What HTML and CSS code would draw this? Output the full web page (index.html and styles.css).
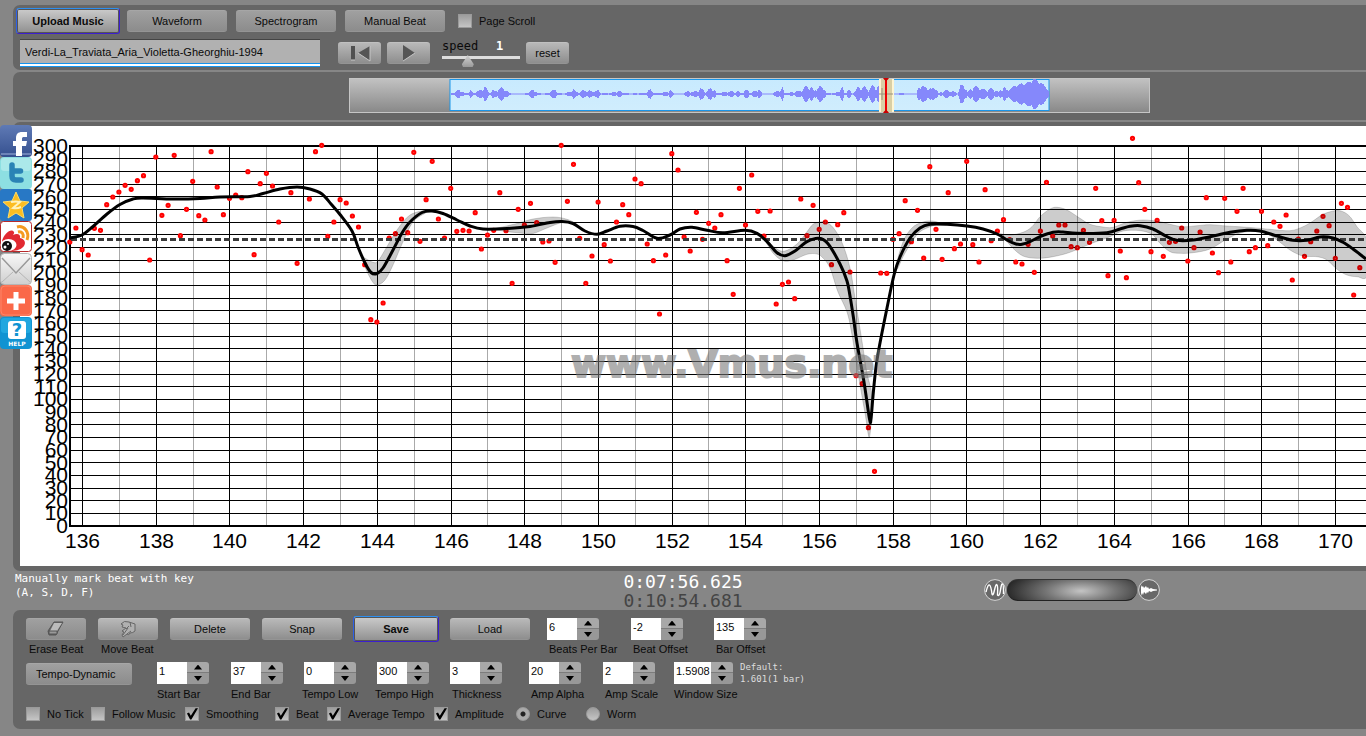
FILE: index.html
```html
<!DOCTYPE html>
<html lang="en">
<head>
<meta charset="utf-8">
<title>Vmus.net</title>
<link rel="stylesheet" href="styles.css">
</head>
<body>
<nav class="share" aria-label="Share">
  <a href="#" aria-label="Facebook"><svg viewBox="0 0 32 32"><defs><linearGradient id="fb" x2="0" y2="1"><stop offset="0" stop-color="#5f7ab5"/><stop offset="1" stop-color="#35508f"/></linearGradient></defs><rect width="32" height="32" rx="4" fill="url(#fb)"/><rect x="1" y="28" width="30" height="2" fill="#6d84b8"/><path d="M16 31V21h-3v-5h3v-3c0-4 2-6 6-6h5v5h-3c-1.500 0-2 .6-2 2v2h5l-1 5h-4v10z" fill="#fff"/></svg></a>
  <a href="#" aria-label="Twitter"><svg viewBox="0 0 32 32"><rect width="32" height="32" rx="4" fill="#8ddfe2"/><rect x="1" y="1" width="30" height="13" rx="3" fill="#abe9ea"/><path d="M12 8v11q0 4 4 4h5M12 14h8.500" fill="none" stroke="#2a83b5" stroke-width="5.500" stroke-linecap="round" stroke-linejoin="round"/></svg></a>
  <a href="#" aria-label="Qzone"><svg viewBox="0 0 32 32"><rect width="32" height="32" rx="3" fill="#2878c5"/><path d="M16 3l4 9 9 1-7 6 2 10-8-5-8 5 2-10-7-6 9-1z" fill="#fcbd22" stroke="#fddc68"/><path d="M11 13q5-1 9 0l-7 6q4 1 8-1" fill="none" stroke="#fff3bd" stroke-width="2"/></svg></a>
  <a href="#" aria-label="Weibo"><svg viewBox="0 0 32 32"><rect x=".5" y=".5" width="31" height="30" rx="3" fill="#fff" stroke="#b7292b"/><path d="M2 20C4 13 10 8 13 10c2 1 1 3 0 4 4-2 8-1 7 3 5 1 6 5 4 8-4 6-19 7-22 0z" fill="#e22931"/><ellipse cx="8.500" cy="24" rx="8" ry="6" fill="#fff"/><circle cx="7" cy="25" r="5" fill="#111"/><circle cx="5" cy="26" r="1.500" fill="#fff"/><circle cx="8" cy="23" r="1" fill="#fff"/><path d="M17 6c7-2 13 5 10 13M18 11c4-1 6 2 5 6" fill="none" stroke="#f49a22" stroke-width="3"/></svg></a>
  <a href="#" aria-label="Email"><svg viewBox="0 0 32 32"><defs><linearGradient id="ml" x2="0" y2="1"><stop offset="0" stop-color="#f7f7f7"/><stop offset="1" stop-color="#cfcfcf"/></linearGradient></defs><rect x=".5" y=".5" width="31" height="31" rx="4" fill="url(#ml)" stroke="#b5b5b5"/><path d="M2 29l11-10M30 29L19 19" stroke="#b5b5b5"/><path d="M2 5l14 15L30 5" fill="none" stroke="#999" stroke-width="1.500"/></svg></a>
  <a href="#" aria-label="More"><svg viewBox="0 0 32 32"><rect width="32" height="31" rx="4" fill="#fa6848"/><rect x="1" y="1" width="30" height="29" rx="4" fill="none" stroke="#fc8568"/><path d="M13.500 7h5v6.500H25v5h-6.500V25h-5v-6.500H7v-5h6.500z" fill="#fff"/></svg></a>
  <a href="#" aria-label="Help"><svg viewBox="0 0 32 32"><rect width="32" height="32" rx="4" fill="#1093d2"/><rect x="1" y="1" width="30" height="15" rx="3" fill="#20a7df"/><rect x="8" y="4" width="18" height="18" rx="3" fill="#fff"/><text x="17" y="19" class="share-mark">?</text><text x="17" y="29" class="share-help">HELP</text></svg></a>
</nav>

<main class="app">
  <header class="panel toolbar">
    <div class="row row-modes">
      <button class="btn btn-focus btn-wide">Upload Music</button>
      <button class="btn btn-dim btn-wide">Waveform</button>
      <button class="btn btn-dim btn-wide">Spectrogram</button>
      <button class="btn btn-dim btn-wide">Manual Beat</button>
      <label class="check check-scroll"><input type="checkbox">Page Scroll</label>
    </div>
    <div class="row row-track">
      <input class="track" type="text" aria-label="Track" value="Verdi-La_Traviata_Aria_Violetta-Gheorghiu-1994">
      <button class="btn btn-icon" aria-label="Back to start"><svg width="22" height="18" viewBox="0 0 22 18"><path d="M2 2h4v14H2z" fill="#505050"/><path d="M21 2L9 9l12 8z" fill="#555"/><path d="M6 16H2M9 9l12 8V2" fill="none" stroke="#c6c6c6"/></svg></button>
      <button class="btn btn-icon" aria-label="Play"><svg width="22" height="18" viewBox="0 0 22 18"><path d="M5 1v16l12-8z" fill="#555"/><path d="M5 17l12-8" stroke="#c6c6c6"/></svg></button>
      <div class="speed">
        <label for="speed">speed</label><output for="speed">1</output>
        <input id="speed" type="range" min="0" max="3" step="0.1" value="0.9">
      </div>
      <button class="btn btn-icon">reset</button>
    </div>
  </header>

  <section class="panel overview">
    <svg id="overview" viewBox="349 78 801 36" role="img" aria-label="Recording overview">
      <defs>
        <linearGradient id="og" x2="0" y2="1"><stop offset="0" stop-color="#c2c2c2"/><stop offset="1" stop-color="#888"/></linearGradient>
        <linearGradient id="sg" x2="0" y2="1"><stop offset="0" stop-color="#c8eafe"/><stop offset="1" stop-color="#d0edfd"/></linearGradient>
      </defs>
      <rect x="349.500" y="78.500" width="800" height="34" fill="url(#og)" stroke="#c6c6c6"/>
      <rect x="450" y="79.500" width="599" height="31" fill="url(#sg)" stroke="#1b95e8"/>
      <path id="wave" fill="#8588fb"/>
      <rect x="879" y="79" width="15" height="33" fill="#fff5d2"/>
      <rect x="881" y="79" width="11" height="33" fill="#d9cfa5"/>
      <path d="M879 94h14M882 88v12" stroke="#98917c"/>
      <rect x="885" y="79" width="2" height="33" fill="#e00"/>
      <path d="M883 78h6q-1 2-3 3q-2-1-3-3zM883 113h6q-1-2-3-3q-2 1-3 3z" fill="#c00"/>
    </svg>
  </section>

  <section class="panel chart">
    <svg id="chart" viewBox="20 126 1346 440" role="img" aria-label="Tempo curve">
      <g id="grid"></g>
      <g id="dots"></g>
      <g id="bands"></g>
      <path class="average" d="M71 239.500H1366"/>
      <path id="curve"/>
      <text class="mark" x="571" y="377">www.Vmus.net</text>
      <g id="axes"></g>
    </svg>
  </section>

  <section class="status">
    <p class="hint">Manually mark beat with key<br>(A, S, D, F)</p>
    <p class="clock">0:07:56.625<br><span class="total">0:10:54.681</span></p>
    <div class="zoom">
      <svg width="22" height="22" viewBox="0 0 22 22"><circle cx="11" cy="11" r="10.400" fill="#686868" stroke="#d5d5d5"/><path d="M2 13q2-8 3.500-7T8 15q1 3 2.500-4T13 6q1 1 .5 10 2 2 3-5t2-6q1 0 1 10" fill="none" stroke="#fff" stroke-width="1.400"/></svg>
      <div class="drum"></div>
      <svg width="22" height="22" viewBox="0 0 22 22"><circle cx="11" cy="11" r="10.400" fill="#686868" stroke="#d5d5d5"/><path d="M3 6l1 2 1-1 1 2 2-2 1 2 1-1 1 2 2-1 2 1 4 .5v1l-4 .5-2 1-2-1-1 2-1-1-1 2-2-2-1 3-1-2-1 3z" fill="#fff"/></svg>
    </div>
  </section>

  <section class="panel controls">
    <div class="controls-beat">
      <div class="tool"><button id="erase" class="btn btn-dim" aria-label="Erase Beat"><svg width="18" height="16" viewBox="0 0 18 16"><path d="M1 10L7 1h9l-5 9-2 4H2z" fill="#666" stroke="#555"/><path d="M7 2h8l-5 8H3z" fill="#bbb"/><path d="M2 10h8v3H2z" fill="#999" stroke="#555"/></svg></button><label for="erase">Erase Beat</label></div>
      <div class="tool"><button id="move" class="btn" aria-label="Move Beat"><svg width="18" height="18" viewBox="0 0 18 18"><path d="M2 4q3-4 8-2l6 2v7q-2 2-5 2-1 3-3 1l-4 3-1-2 2-3-2-1 4-3-4-1 1-2z" fill="#b0b0b0" stroke="#666"/><path d="M9 8L4 15M10 6L7 9M12 11l-4 3M11 2l1 5" fill="none" stroke="#666"/></svg></button><label for="move">Move Beat</label></div>
      <button class="btn">Delete</button>
      <button class="btn">Snap</button>
      <button class="btn btn-focus">Save</button>
      <button class="btn">Load</button>
      <div class="field inset"><div class="spin"><input id="bpb" value="6"><button aria-label="Increase"></button><button aria-label="Decrease"></button></div><label for="bpb">Beats Per Bar</label></div>
      <div class="field inset"><div class="spin"><input id="bto" value="-2"><button aria-label="Increase"></button><button aria-label="Decrease"></button></div><label for="bto">Beat Offset</label></div>
      <div class="field inset"><div class="spin"><input id="bro" value="135"><button aria-label="Increase"></button><button aria-label="Decrease"></button></div><label for="bro">Bar Offset</label></div>
    </div>
    <div class="controls-range">
      <button class="btn btn-dim btn-left">Tempo-Dynamic</button>
      <div class="field"><div class="spin"><input id="sb" value="1"><button aria-label="Increase"></button><button aria-label="Decrease"></button></div><label for="sb">Start Bar</label></div>
      <div class="field"><div class="spin"><input id="eb" value="37"><button aria-label="Increase"></button><button aria-label="Decrease"></button></div><label for="eb">End Bar</label></div>
      <div class="field outset"><div class="spin"><input id="tl" value="0"><button aria-label="Increase"></button><button aria-label="Decrease"></button></div><label for="tl">Tempo Low</label></div>
      <div class="field outset"><div class="spin"><input id="th" value="300"><button aria-label="Increase"></button><button aria-label="Decrease"></button></div><label for="th">Tempo High</label></div>
      <div class="field inset"><div class="spin"><input id="tk" value="3"><button aria-label="Increase"></button><button aria-label="Decrease"></button></div><label for="tk">Thickness</label></div>
      <div class="field inset"><div class="spin"><input id="aa" value="20"><button aria-label="Increase"></button><button aria-label="Decrease"></button></div><label for="aa">Amp Alpha</label></div>
      <div class="field inset"><div class="spin"><input id="as" value="2"><button aria-label="Increase"></button><button aria-label="Decrease"></button></div><label for="as">Amp Scale</label></div>
      <div class="field"><div class="spin spin-wide"><input id="ws" value="1.5908"><button aria-label="Increase"></button><button aria-label="Decrease"></button></div><label for="ws">Window Size</label></div>
      <p class="default">Default:<br>1.601(1 bar)</p>
    </div>
    <div class="controls-view">
      <label class="check"><input type="checkbox">No Tick</label>
      <label class="check"><input type="checkbox">Follow Music</label>
      <label class="check"><input type="checkbox" checked>Smoothing</label>
      <label class="check"><input type="checkbox" checked>Beat</label>
      <label class="check"><input type="checkbox" checked>Average Tempo</label>
      <label class="check"><input type="checkbox" checked>Amplitude</label>
      <label class="check"><input type="radio" name="view" checked>Curve</label>
      <label class="check"><input type="radio" name="view">Worm</label>
    </div>
  </section>
</main>
<script src="chart.js"></script>
</body>
</html>
```

FILE: styles.css
```css
* { box-sizing: border-box; }

body {
  margin: 0;
  min-height: 100vh;
  background: #868686;
  color: #0a0a0a;
  font: 11px/14px "Liberation Sans", Arial, sans-serif;
  overflow-x: hidden;
}

p { margin: 0; }
button, input { font: inherit; color: inherit; margin: 0; padding: 0; border: 0; }
svg { display: block; }

.app {
  display: flex;
  flex-direction: column;
  padding: 5px 0 0 13px;
}

.panel {
  background: #666;
  border-radius: 7px 0 0 7px;
}

/* Share bar lies over the left edge of the chart */
.share {
  position: absolute;
  z-index: 2;
  left: 0;
  top: 125px;
  display: flex;
  flex-direction: column;
}
.share svg { width: 32px; height: 32px; }
.share-mark { font: bold 18px "DejaVu Sans", sans-serif; fill: #1093d2; text-anchor: middle; }
.share-help { font: bold 6px "DejaVu Sans", sans-serif; fill: #fff; text-anchor: middle; }

/* Buttons */
.btn {
  height: 22px;
  display: flex;
  align-items: center;
  justify-content: center;
  white-space: nowrap;
  border-radius: 3px;
  border-top: 1px solid #c0c0c0;
  border-bottom: 1px solid #949494;
  background: linear-gradient(#b8b8b8, #8e8e8e);
}
.btn-dim { background: linear-gradient(#a0a0a0, #8c8c8c); border-top-color: #a6a6a6; }
.btn-wide { width: 100px; }
.btn-icon { width: 43px; }
.btn-left { justify-content: flex-start; padding-left: 10px; }
.btn-focus {
  height: 26px;
  font-weight: bold;
  border: 1px solid #3c1fd0;
  border-top-color: #2d8ff0;
  border-left-color: #2d60e8;
  background: linear-gradient(#cbcbcb, #8f8f8f);
  box-shadow: inset 0 0 0 1px #555;
}
.btn-focus.btn-wide { width: 104px; }

/* Toolbar */
.toolbar {
  display: flex;
  flex-direction: column;
  gap: 5px;
  padding: 3px 0 3px 3px;
  margin-bottom: 2px;
}
.row { display: flex; align-items: center; }
.row-modes { gap: 9px; }
.row-modes .btn-focus { margin-right: -2px; }
.row-track { gap: 6px; padding-left: 4px; }
.check { display: flex; align-items: center; gap: 7px; white-space: nowrap; }
.check-scroll { margin-left: 4px; }
.track {
  width: 300px;
  height: 28px;
  margin-right: 12px;
  padding: 0 5px 3px;
  background: #b1b1b1;
  border-top: 1px solid #444;
  border-bottom: 1px solid #1594ee;
  box-shadow: inset 0 -2px #fff, inset 0 -3px #1594ee;
}

.speed {
  width: 78px;
  margin: 0 0 0 6px;
  display: grid;
  grid-template-columns: 54px 1fr;
  font: 12px/14px "DejaVu Sans Mono", monospace;
}
.speed output { color: #fff; font-weight: bold; }
.speed input {
  grid-column: 1 / 3;
  appearance: none;
  width: 78px;
  height: 14px;
  background: linear-gradient(#ddd, #ddd) 0 3px / 100% 3px no-repeat;
}
.speed input::-webkit-slider-thumb {
  appearance: none;
  width: 12px;
  height: 14px;
  background: linear-gradient(#ddd, #999);
  clip-path: polygon(50% 15%, 100% 80%, 90% 100%, 10% 100%, 0 80%);
}

/* Tick boxes and radios */
.check input {
  appearance: none;
  width: 14px;
  height: 14px;
  background: linear-gradient(#9d9d9d, #c5c5c5);
  border: 1px solid #9a9a9a;
}
.check input[type="checkbox"]:checked::before {
  content: "";
  display: block;
  height: 12px;
  background: #000;
  clip-path: polygon(8% 45%, 25% 38%, 40% 65%, 80% 2%, 100% 2%, 45% 96%, 34% 96%);
}
.check input[type="radio"] { border-radius: 50%; }
.check input[type="radio"]:checked { background: radial-gradient(circle, #222 0 2px, #aaa 3px); }

/* Overview strip */
.overview { padding: 6px 216px 6px 336px; margin-bottom: 2px; }
.overview svg { width: 100%; }

/* Tempo chart */
.chart { padding: 4px 0 5px 7px; }
.chart svg { width: 100%; background: #fff; }
.minor { stroke: #aaa; stroke-width: 1; }
.major { stroke: #000; stroke-width: 1; }
.frame { stroke: #000; stroke-width: 2; }
.average { stroke: #3a3a3a; stroke-width: 3; stroke-dasharray: 6 3; }
#curve { fill: none; stroke: #000; stroke-width: 3; stroke-linejoin: round; }
#dots circle { fill: #f55; stroke: #f00; stroke-width: 2; }
#bands path { fill: rgba(0, 0, 0, .2); stroke: rgba(0, 0, 0, .16); }
.mark { font: bold 38px "DejaVu Sans", sans-serif; fill: #777; stroke: #777; stroke-width: 2; opacity: .58; }
.tick-x { font: 21px "Liberation Sans", Arial, sans-serif; text-anchor: middle; }
.tick-y { font: 21px "Liberation Sans", Arial, sans-serif; text-anchor: end; }

/* Status line */
.status {
  display: grid;
  grid-template-columns: 1fr auto 1fr;
  align-items: start;
  height: 39px;
  padding-right: 13px;
  color: #fff;
  font: 11px/14px "DejaVu Sans Mono", monospace;
}
.hint { padding: 1px 2px; }
.clock { font-size: 18px; line-height: 19px; padding-top: 1px; }
.total { color: #444; }
.zoom { display: flex; align-items: center; gap: 1px; padding: 8px 0 0 241px; }
.drum {
  width: 130px;
  height: 22px;
  border-radius: 11px;
  border-top: 1px solid #333;
  border-bottom: 1px solid #222;
  background: radial-gradient(ellipse 76px 24px at 57% 55%, #c4c4c4, #777 45%, #262626);
}

/* Lower controls */
.controls { padding: 6px 13px 7px; }
.controls-beat, .controls-range, .controls-view { display: grid; align-items: start; }
.controls-beat {
  grid-template-columns: 60px 60px 80px 80px 84px 80px 52px 52px 52px;
  column-gap: 12px;
  height: 45px;
}
.controls-beat > * { margin-top: 2px; }
.controls-beat > .btn-focus { margin: 0 -1px; }
.controls-beat .inset { margin-left: 5px; }
.controls-beat .inset + .inset { margin-left: 25px; }
.controls-beat .inset + .inset + .inset { margin-left: 44px; }
.tool { display: flex; flex-direction: column; gap: 2px; white-space: nowrap; }
.tool label { padding: 0 3px; }
.controls-range {
  grid-template-columns: 131px 74px 73px 73px 73px 79px 74px 71px 66px 1fr;
  height: 44px;
}
.controls-range .btn { width: 106px; margin-top: 2px; }
.controls-view {
  grid-template-columns: 65px 94px 90px 52px 107px 82px 70px 1fr;
  height: 17px;
  padding-top: 2px;
}

.field { display: flex; flex-direction: column; gap: 3px; white-space: nowrap; padding-top: 1px; width: 52px; }
.controls-beat .field { gap: 2px; padding-top: 0; }
.inset label { margin-left: 2px; }
.outset label { margin-left: -2px; }
.spin { display: grid; grid-template-columns: 30px 22px; grid-template-rows: 11px 11px; }
.spin-wide { grid-template-columns: 37px 22px; }
.spin input { grid-row: 1 / 3; width: 100%; background: #fff; padding: 0 0 5px 2px; }
.spin button {
  display: flex;
  justify-content: center;
  align-items: center;
  border-radius: 0 3px 0 0;
  background: #a8a8a8;
  border-bottom: 1px solid #7c7c7c;
}
.spin button:last-child { grid-column: 2; border-radius: 0 0 3px 0; background: #989898; border-bottom: 0; }
.spin button::before {
  content: "";
  width: 8px;
  height: 5px;
  background: #000;
  clip-path: polygon(50% 0, 100% 100%, 0 100%);
}
.spin button:last-child::before { clip-path: polygon(0 0, 100% 0, 50% 100%); }
.default { color: #ddd; font: 9px/12px "DejaVu Sans Mono", monospace; white-space: nowrap; }
```

FILE: chart.js
```javascript
const NS = "http://www.w3.org/2000/svg";

function add(parent, name, attrs, text) {
  const el = document.createElementNS(NS, name);
  for (const key in attrs) el.setAttribute(key, attrs[key]);
  if (text !== undefined) el.textContent = text;
  document.getElementById(parent).appendChild(el);
}

// Smooth path through a flat list of x, y values
function smooth(flat) {
  const p = [];
  for (let i = 0; i < flat.length; i += 2) p.push([flat[i], flat[i + 1]]);
  let d = "M" + p[0];
  for (let i = 0; i < p.length - 1; i++) {
    const a = p[i - 1] || p[i], b = p[i], c = p[i + 1], e = p[i + 2] || c;
    d += "C" + [b[0] + (c[0] - a[0]) / 6, b[1] + (c[1] - a[1]) / 6,
      c[0] - (e[0] - b[0]) / 6, c[1] - (e[1] - b[1]) / 6, c[0], c[1]];
  }
  return d;
}

// Grid and axis labels
const barX = bar => 82.5 + (bar - 136) * 36.85;
const tempoY = tempo => 526 - tempo * 380 / 300;
for (let bar = 136; bar <= 170; bar++) {
  const x = Math.floor(barX(bar)) + 0.5;
  add("grid", "path", { class: bar % 2 ? "minor" : "major", d: `M${x} 146V526` });
  if (bar % 2 === 0) add("axes", "text", { class: "tick-x", x: x, y: 548 }, bar);
}
for (let tempo = 0; tempo <= 300; tempo += 10) {
  const y = tempoY(tempo);
  if (tempo % 300) add("grid", "path", { class: "major", d: `M70 ${Math.floor(y) + 0.5}H1366` });
  add("axes", "text", { class: "tick-y", x: 68, y: Math.round(y) + 7 }, tempo);
}
add("grid", "path", { class: "frame", d: "M70 145V527M70 146H1366M70 526H1366" });

// Beat tempo, one value per beat, in thirds of a unit below the chart top
const beats = [
  351,309,374,390,310,316,239,216,201,181,193,167,152,405,96,271,241,91,332,253,169,272,285,80,186,269,220,
  210,218,140,389,176,145,183,291,null,203,415,null,222,80,61,334,
  291,224,234,273,306,419,584,591,534,339,326,282,323,82,349,224,109,282,339,190,319,316,318,263,372,330,
  316,203,317,475,253,300,235,293,351,348,412,61,229,118,340,475,393,231,359,408,291,239,269,162,176,357,
  407,567,390,86,135,
  336,378,262,343,295,309,269,407,508,190,300,150,259,333,258,537,478,471,521,222,332,241,313,291,419,299,
  263,441,752,776,908,1039,444,445,
  343,326,227,350,256,399,125,313,403,203,371,357,109,359,411,194,347,318,284,344,411,
  417,358,442,318,172,333,300,300,365,368,316,352,190,287,452,286,378,458,40,173,253,380,286,394,352,349,
  309,408,368,321,218,384,443,220,411,259,190,380,368,259,362,291,304,270,465,342,394,350,318,274,302,400,
  235,247,510,428
];
beats.forEach((v, i) => {
  if (v !== null) add("dots", "circle", { cx: (69.8 + i * 6.143).toFixed(1), cy: (125 + v / 3).toFixed(1), r: 1.6 });
});

// Smoothed tempo
document.getElementById("curve").setAttribute("d", smooth([
  70,238, 82,235, 93,226.5, 107,214, 120,204.5, 133,199, 143,198, 173,199, 200,198.5, 220,197, 250,196.5,
  263,193.5, 280,189, 297,187, 310,189, 322,194, 331,204, 340,214.5, 352,231, 358,247, 365,263, 371,272.5,
  377,273.5, 383,268, 393,250, 402,233, 410,222, 422,212.5, 432,211, 443,213.5, 457,220, 470,226, 483,229,
  507,228.5, 530,226.5, 550,222.5, 562,221.5, 573,223.5, 585,231, 597,234.3, 607,231, 620,226.3, 633,226.5,
  643,230.5, 657,238.3, 670,235, 680,229, 692,227.3, 707,230.3, 723,232.7, 745,230.3, 757,233.3, 767,241.7,
  777,252.7, 785,255.7, 795,251, 807,241.7, 819,238.3, 828,243.7, 840,264, 847,281, 850,296, 853.5,318,
  857,343, 864,382, 869.5,419, 871,419, 873,396, 876,367, 880,343, 887,308, 894,275, 900,257, 910,238,
  920,228, 930,224.3, 947,224.3, 967,226, 983,229, 997,234, 1007,240, 1016,244, 1022,244.3, 1030,241.7,
  1040,236.7, 1053,232.3, 1063,232, 1077,233.3, 1107,232.7, 1120,229, 1130,226.3, 1140,225.7, 1153,229,
  1167,236.7, 1177,240.3, 1193,240, 1210,236.7, 1230,232.3, 1247,230.3, 1260,231, 1277,236, 1293,240.3,
  1307,240.3, 1320,237, 1333,238, 1343,242.3, 1353,249, 1366,259
]));

// Amplitude bands: upper edge left to right, then lower edge back
[
  [363,257, 373,262.3, 378,261, 385,250, 397,230, 410,215, 427,210, 427,212, 413,222, 402,244, 393,265,
   385,280, 377,285, 372,281, 365,267, 363,257],
  [493,229, 517,223.5, 533,219, 553,217, 567,219.3, 577,224.5, 563,222.5, 547,228, 533,233.5, 520,233,
   503,231, 493,229],
  [763,236.7, 777,249, 785,251, 797,244, 807,231.7, 813,224.3, 820,222, 827,222.3, 835,230, 843,245,
   850,268, 855,298, 861,335, 867,373, 872,397, 869.5,437, 865,413, 858,373, 852,335, 847,312, 838,292,
   830,268, 823,258, 817,254, 807,254.3, 793,260, 783,260.7, 773,253, 763,236.7],
  [894,272, 903,242, 912,228, 922,222.3, 932,221, 942,224, 933,225.7, 920,231.7, 912,241.7, 903,256.7,
   898,268, 894,272],
  [997,233, 1010,235, 1023,232.3, 1032,226.7, 1040,216.7, 1050,209, 1057,207.3, 1067,210, 1080,218.3,
   1090,224.3, 1103,227, 1113,227.3, 1127,222.3, 1143,220, 1160,221.7, 1170,224.3, 1183,226.7, 1197,225.7,
   1210,224.7, 1227,226, 1253,227.7, 1270,229.3, 1290,230.7, 1303,226.7, 1313,221, 1323,214.3, 1335,210.7,
   1343,211.7, 1350,216.7, 1357,226.7, 1367,241, 1367,275.7, 1357,276.7, 1347,275, 1337,269.3, 1327,260,
   1317,256.7, 1303,256, 1290,250, 1277,240, 1263,232.3, 1243,232.3, 1227,239, 1210,249, 1193,252.7,
   1180,253.3, 1170,251.7, 1160,243.3, 1152,234.3, 1140,230.7, 1123,231, 1110,236.7, 1090,244, 1070,252.3,
   1053,256.7, 1037,258.3, 1023,256, 1013,248.3, 1007,241.7, 997,233]
].forEach(band => add("bands", "path", { d: smooth(band) + "Z" }));

// Overview waveform: x, half height
const env = [
  450,.5, 455,2, 459,6, 462,2, 466,1, 470,4, 474,1, 477,3, 480,4, 484,9, 487,4, 489,1, 492,4, 495,3, 498,6,
  502,7, 505,6, 508,2, 511,.5, 524,.5, 528,2, 534,6, 537,1, 544,.5, 550,3, 555,5, 558,1, 563,.5, 568,2,
  573,6, 576,2, 582,4, 588,4, 592,3, 598,4, 601,1, 610,1, 618,4, 624,1, 630,.5, 643,1, 650,5, 654,1, 663,2,
  670,4, 674,.5, 683,.5, 689,4, 693,2, 700,6, 706,3, 712,8, 716,1, 722,2, 728,3, 738,3, 741,1, 747,5, 750,1,
  758,6, 762,.5, 772,.5, 782,7, 784,1, 792,2, 800,4, 806,9, 810,9, 814,3, 816,8, 820,8, 824,8, 826,1, 835,1,
  842,7, 844,1, 848,5, 852,.5, 857,7, 862,9, 868,5, 872,9, 878,9, 884,9, 888,1, 893,.3, 900,1, 905,.3,
  916,.5, 920,13, 924,7, 927,9, 931,5, 935,9, 938,1, 944,4, 950,4, 957,1, 960,9, 964,11, 967,2, 973,9, 979,8,
  983,5, 988,6, 994,6, 998,2, 1003,9, 1006,4, 1010,6, 1015,9, 1022,11, 1028,12, 1033,16, 1040,12, 1045,8,
  1048,3, 1049,0
];
let wave = "";
let k = 0;
for (let x = 451; x < 1049; x++) {
  while (env[k + 2] < x) k += 2;
  const t = (x - env[k]) / (env[k + 2] - env[k]);
  const level = env[k + 1] + (env[k + 3] - env[k + 1]) * t;
  const jitter = (x > 1008 ? 0.75 : 0.35) + (x > 1008 ? 0.25 : 0.65) * Math.abs(Math.sin(x * 12.9898));
  const h = Math.max(0.5, Math.round(level * jitter));
  wave += `M${x} ${94 - h}h1v${2 * h}h-1z`;
}
document.getElementById("wave").setAttribute("d", wave);
```
